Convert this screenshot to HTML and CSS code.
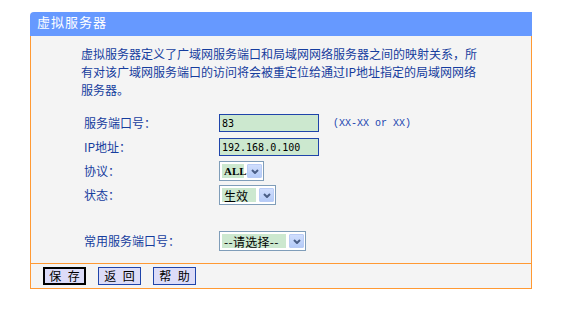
FILE: index.html
```html
<!DOCTYPE html>
<html lang="zh-CN">
<head>
<meta charset="utf-8">
<title>虚拟服务器</title>
<link rel="stylesheet" href="styles.css">
</head>
<body>
<div class="panel">
  <div class="title">虚拟服务器</div>
  <div class="content">
    <p class="intro">虚拟服务器定义了广域网服务端口和局域网网络服务器之间的映射关系，所有对该广域网服务端口的访问将会被重定位给通过IP地址指定的局域网网络服务器。</p>
    <div class="form">
      <div class="row">
        <span class="lbl">服务端口号：</span>
        <input class="txt" type="text" value="83">
        <span class="hint">(XX-XX or XX)</span>
      </div>
      <div class="row">
        <span class="lbl">IP地址：</span>
        <input class="txt" type="text" value="192.168.0.100">
      </div>
      <div class="row">
        <span class="lbl">协议：</span>
        <span class="sel"><span class="val val-all">ALL</span><span class="arrow"><svg width="8" height="5" viewBox="0 0 8 5"><path d="M1 1 L4 4 L7 1" fill="none" stroke="#4a5e86" stroke-width="2"/></svg></span></span>
      </div>
      <div class="row">
        <span class="lbl">状态：</span>
        <span class="sel"><span class="val val-state">生效</span><span class="arrow"><svg width="8" height="5" viewBox="0 0 8 5"><path d="M1 1 L4 4 L7 1" fill="none" stroke="#4a5e86" stroke-width="2"/></svg></span></span>
      </div>
      <div class="row row-gap">
        <span class="lbl">常用服务端口号：</span>
        <span class="sel"><span class="val val-common">--请选择--</span><span class="arrow"><svg width="8" height="5" viewBox="0 0 8 5"><path d="M1 1 L4 4 L7 1" fill="none" stroke="#4a5e86" stroke-width="2"/></svg></span></span>
      </div>
    </div>
  </div>
  <div class="actions">
    <button class="btn btn-default" type="button">保 存</button>
    <button class="btn" type="button">返 回</button>
    <button class="btn" type="button">帮 助</button>
  </div>
</div>
</body>
</html>
```
FILE: styles.css
```css
html, body {
  margin: 0;
  padding: 0;
  background: #ffffff;
}

body {
  font-family: "Noto Sans CJK SC", sans-serif;
  font-size: 12px;
  color: #163d9e;
}

.panel {
  width: 502px;
  margin: 12px 0 0 30px;
}

.title {
  height: 24px;
  box-sizing: border-box;
  background: #6699ff;
  color: #ffffff;
  border-top-left-radius: 4px;
  padding-left: 7px;
  line-height: 20px;
  font-size: 13px;
  letter-spacing: 1px;
}

.content {
  background: #f4f4f4;
  border: 1px solid #ff9933;
  border-top: none;
  padding: 9px 0 10px 50px;
}

.intro {
  margin: 0;
  width: 400px;
  font-size: 12px;
  line-height: 18px;
}

.form {
  margin-top: 12px;
}

.row {
  display: flex;
  align-items: center;
  height: 24px;
  padding-left: 3px;
}

.row-gap {
  margin-top: 22px;
}

.lbl {
  width: 135px;
  flex: none;
  line-height: 18px;
}

.txt {
  box-sizing: border-box;
  width: 100px;
  height: 18px;
  margin: 0;
  border: 1px solid #1f44aa;
  background: #cce8cf;
  padding: 0 2px;
  font-family: "DejaVu Sans Mono", monospace;
  font-size: 10px;
  color: #000000;
  outline: none;
}

.hint {
  margin-left: 14px;
  font-family: "Liberation Mono", monospace;
  font-size: 10px;
  color: #1a44b0;
}

.sel {
  display: inline-flex;
  box-sizing: border-box;
  height: 20px;
  border: 1px solid #7f9db9;
  background: #ffffff;
  padding: 2px 1px 2px 2px;
  gap: 3px;
}

.val {
  box-sizing: border-box;
  display: flex;
  align-items: center;
  height: 14px;
  background: #cce8cf;
  color: #000000;
  padding-left: 2px;
  font-size: 12px;
  white-space: nowrap;
}

.val-all {
  width: 22px;
  font-family: "Liberation Serif", serif;
  font-size: 11px;
  font-weight: bold;
}

.val-state {
  width: 34px;
}

.val-common {
  width: 64px;
  letter-spacing: 0.3px;
}

.arrow {
  box-sizing: border-box;
  width: 15px;
  height: 14px;
  display: flex;
  align-items: center;
  justify-content: center;
  border: 1px solid #b9ccf5;
  border-radius: 1px;
  background: linear-gradient(#d0defd, #b5cbf7);
}

.arrow svg {
  display: block;
}

.actions {
  background: #f4f4f4;
  border: 1px solid #ff9933;
  border-top: none;
  padding: 3px 0 3px 12px;
  display: flex;
  gap: 12px;
}

.btn {
  box-sizing: border-box;
  width: 43px;
  height: 18px;
  margin: 0;
  padding: 0;
  border: 1px solid #1f44aa;
  background: #dcdcf8;
  color: #000000;
  font-family: "Noto Sans CJK SC", sans-serif;
  font-size: 12px;
  line-height: 14px;
  word-spacing: 4px;
}

.btn-default {
  border: 2px solid #000000;
}
```
